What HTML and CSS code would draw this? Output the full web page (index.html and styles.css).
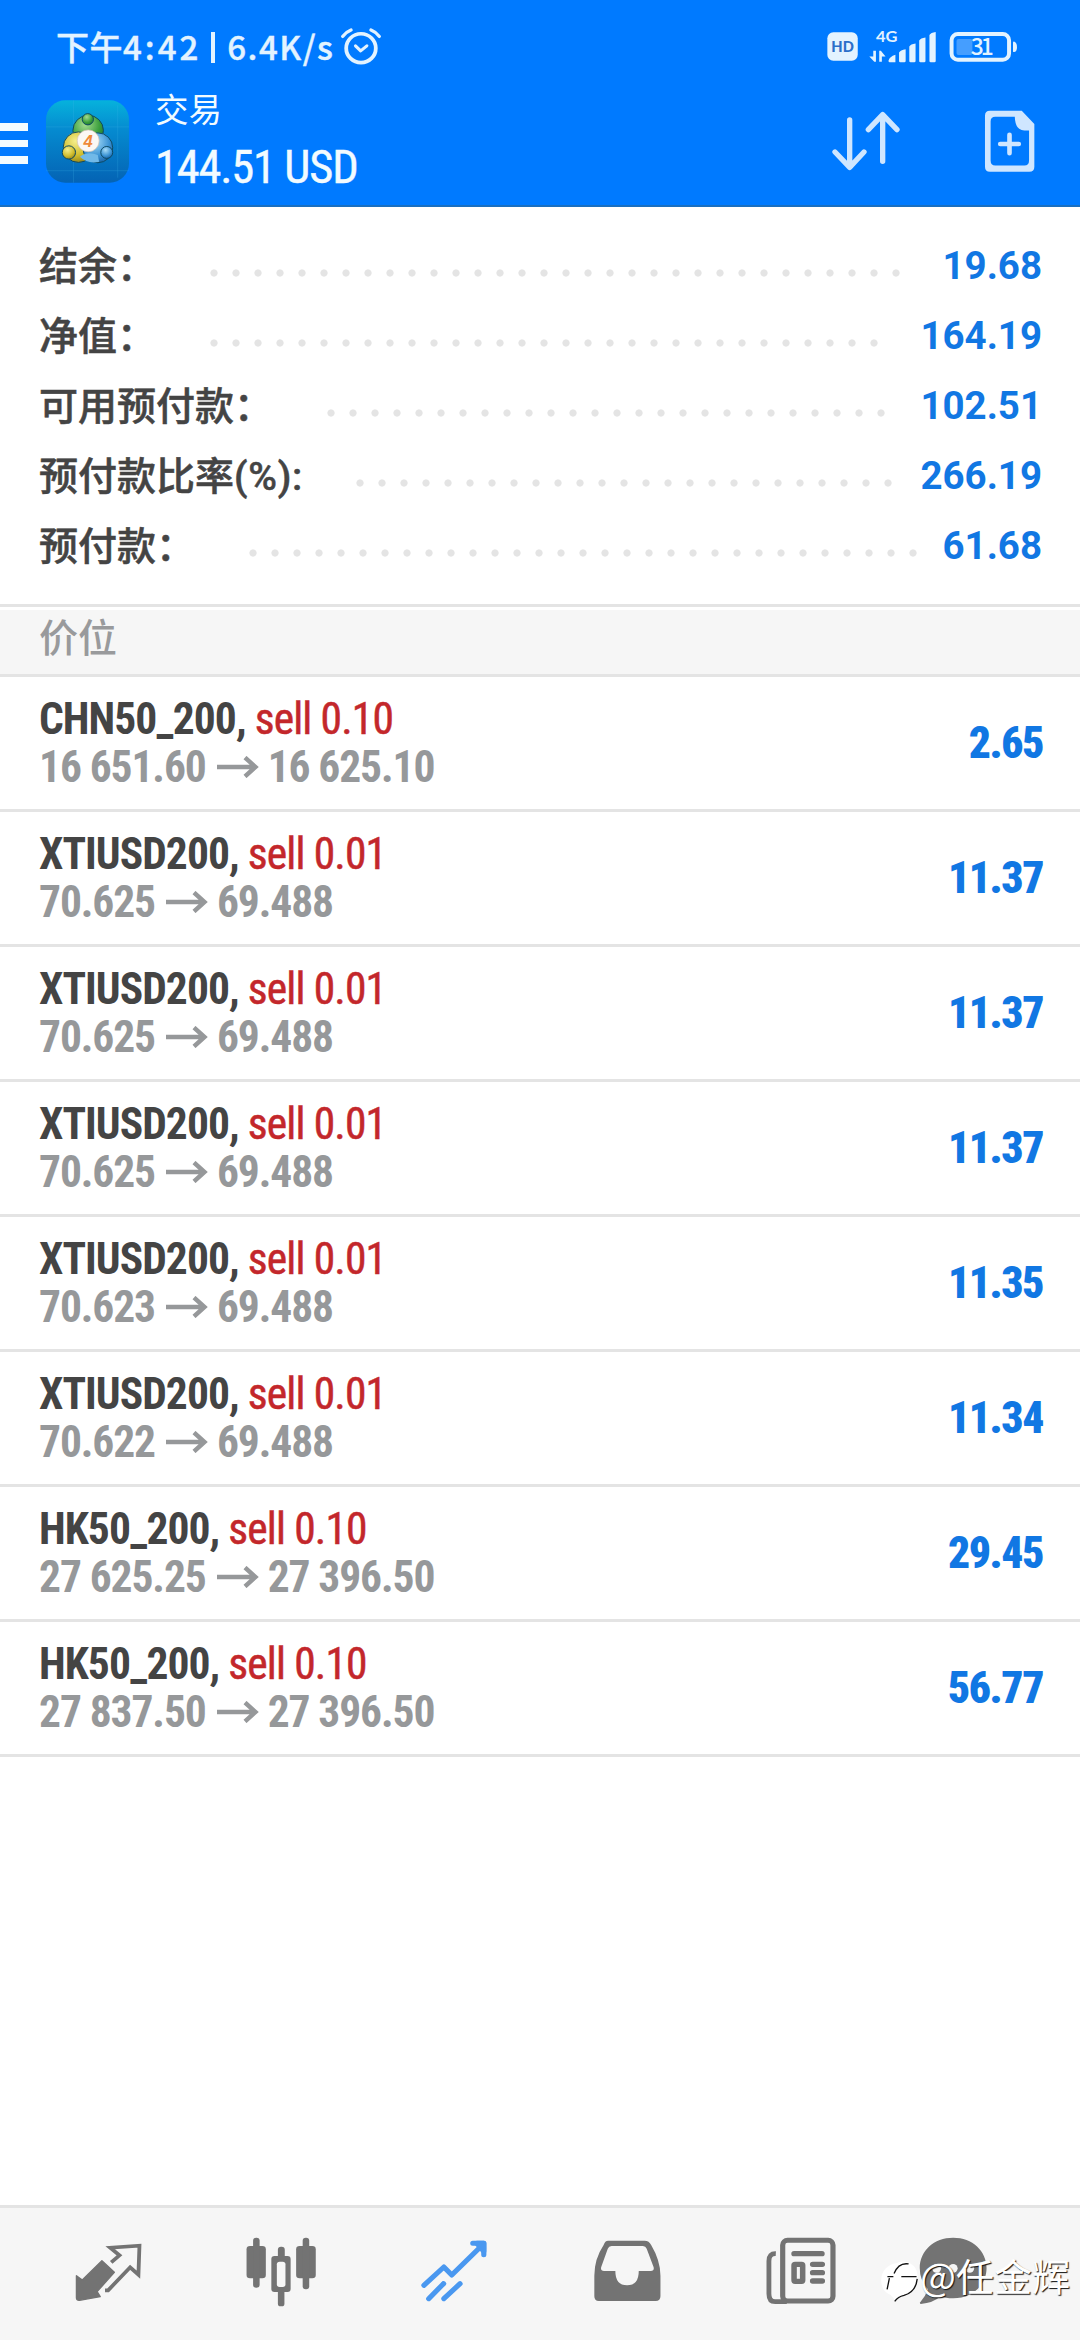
FILE: index.html
```html
<!DOCTYPE html>
<html lang="zh-CN">
<head>
<meta charset="utf-8">
<title>交易</title>
<link rel="stylesheet" href="styles.css">
</head>
<body>
<div class="screen">
  <header class="top">
    <div class="status">
      <div class="status-left">
        <span class="time"><span class="ampm">下午</span>4:42</span><span class="divider"></span><span class="speed">6.4K/s</span>
        <svg class="alarm" viewBox="986 82 122 116" preserveAspectRatio="none" fill="none" stroke="#e3f3ff" stroke-linecap="round" stroke-linejoin="round">
          <circle cx="1047" cy="145" r="43" stroke-width="11"/>
          <path d="M1031 138l15 15 18-15" stroke-width="9"/>
          <path d="M994 110q9-13 24-19M1100 110q-9-13-24-19" stroke-width="10"/>
        </svg>
      </div>
      <svg class="status-right" viewBox="130 84 590 112">
        <rect x="137" y="97" width="92" height="86" rx="18" fill="#e3f3ff"/>
        <text class="hd" x="183" y="158" text-anchor="middle" textLength="68" lengthAdjust="spacingAndGlyphs">HD</text>
        <text class="net" x="284" y="125" textLength="65" lengthAdjust="spacingAndGlyphs">4G</text>
        <g fill="#e3f3ff">
          <path d="M276 153h8v33h-5l-15-16h12zM294 186v-33h5l14 17h-11v16z"/>
          <path d="M322 183q3-12 21-18v23h-17q-4 0-4-5zM354 158q4-7 20-10v36q0 4-4 4h-12q-4 0-4-4zM385 140q4-7 19-9v53q0 4-4 4h-11q-4 0-4-4zM415 122q4-7 19-9v71q0 4-4 4h-11q-4 0-4-4zM446 105q4-7 19-9v88q0 4-4 4h-11q-4 0-4-4z"/>
          <path d="M699 128q0-3 3-3 9 3 9 17t-9 15q-3 0-3-3z"/>
          <rect x="528" y="117" width="48" height="49" rx="6" fill-opacity=".3"/>
        </g>
        <rect x="513" y="102" width="174" height="78" rx="19" fill="none" stroke="#e3f3ff" stroke-width="12"/>
        <text class="level" x="571" y="167" textLength="70">31</text>
      </svg>
    </div>
    <div class="bar">
      <div class="menu"><i></i><i></i><i></i></div>
      <svg class="logo" viewBox="48 45 250 248">
        <defs>
          <linearGradient id="bg" x1="0" y1="0" x2="0" y2="1"><stop offset="0" stop-color="#06b2dc"/><stop offset=".35" stop-color="#058bd0"/><stop offset="1" stop-color="#0463b4"/></linearGradient>
          <radialGradient id="green" cx=".4" cy=".3" r=".8"><stop offset="0" stop-color="#a5dc90"/><stop offset=".6" stop-color="#3a9e3c"/><stop offset="1" stop-color="#176a2a"/></radialGradient>
          <radialGradient id="gold" cx=".4" cy=".3" r=".8"><stop offset="0" stop-color="#f5ee8c"/><stop offset=".6" stop-color="#cfbc2c"/><stop offset="1" stop-color="#857415"/></radialGradient>
          <radialGradient id="blue" cx=".4" cy=".3" r=".8"><stop offset="0" stop-color="#a7dcf8"/><stop offset=".6" stop-color="#3b93d4"/><stop offset="1" stop-color="#13569a"/></radialGradient>
        </defs>
        <rect x="48" y="45" width="250" height="248" rx="58" fill="url(#bg)"/>
        <path d="M131 45v248M264 60v218M48 125h250M48 257h250" stroke="#43b9ea" stroke-width="1.5" opacity=".45"/>
        <g stroke="#0d4a63" stroke-width="3">
          <circle cx="175" cy="136" r="46" fill="url(#green)"/>
          <circle cx="146" cy="186" r="46" fill="url(#gold)"/>
          <circle cx="204" cy="188" r="45" fill="url(#blue)"/>
          <path d="M150 215q24-18 54-5l4 20q-34 8-58-15z" fill="#71b9e8" stroke="none"/>
          <circle cx="174" cy="102" r="17" fill="url(#green)"/>
          <circle cx="117" cy="202" r="20" fill="url(#gold)"/>
          <circle cx="231" cy="202" r="18" fill="url(#blue)"/>
        </g>
        <circle cx="175" cy="167" r="33" fill="#fbf8f5" stroke="#d3bfb2" stroke-width="2"/>
        <text class="four" x="175" y="185" text-anchor="middle">4</text>
      </svg>
      <div class="titles">
        <div class="title">交易</div>
        <div class="balance">144.51 USD</div>
      </div>
      <svg class="act sort" viewBox="150 326 210 192" fill="none" stroke="#cfe6ff" stroke-width="16" stroke-linecap="round" stroke-linejoin="round">
        <path d="M206 359v141M162 455l44 46 43-46M305 483V343M262 388l43-45 43 45"/>
      </svg>
      <svg class="act doc" viewBox="604 326 160 192">
        <path fill="#cfe6ff" fill-rule="evenodd" d="M625 331h96l38 40v129q0 15-15 15H625q-15 0-15-15V346q0-15 15-15zM641 349q-14 0-14 14v118q0 15 14 15h88q14 0 14-15v-91h-14q-28 0-29-41z"/>
        <path d="M684 403v56M656 431h56" stroke="#cfe6ff" stroke-width="14" stroke-linecap="round"/>
      </svg>
    </div>
  </header>

  <section class="summary">
    <div class="sum"><span class="label">结余：</span><i class="dots" style="--n:32"></i><b>19.68</b></div>
    <div class="sum"><span class="label">净值：</span><i class="dots" style="--n:31"></i><b>164.19</b></div>
    <div class="sum"><span class="label">可用预付款：</span><i class="dots" style="--n:26"></i><b>102.51</b></div>
    <div class="sum"><span class="label">预付款比率<span class="latin">(%):</span></span><i class="dots" style="--n:25"></i><b>266.19</b></div>
    <div class="sum"><span class="label">预付款：</span><i class="dots" style="--n:31"></i><b>61.68</b></div>
  </section>

  <h2 class="section">价位</h2>

  <main class="list">
    <div class="row"><div><div class="name">CHN50_200, <span>sell 0.10</span></div><div class="price">16 651.60<svg class="arrow" viewBox="0 0 42 22"><path id="arrow" d="M0 11h39M28 1.500l10.500 9.500-10.500 9.500"/></svg>16 625.10</div></div><b>2.65</b></div>
    <div class="row"><div><div class="name">XTIUSD200, <span>sell 0.01</span></div><div class="price">70.625<svg class="arrow" viewBox="0 0 42 22"><use href="#arrow"/></svg>69.488</div></div><b>11.37</b></div>
    <div class="row"><div><div class="name">XTIUSD200, <span>sell 0.01</span></div><div class="price">70.625<svg class="arrow" viewBox="0 0 42 22"><use href="#arrow"/></svg>69.488</div></div><b>11.37</b></div>
    <div class="row"><div><div class="name">XTIUSD200, <span>sell 0.01</span></div><div class="price">70.625<svg class="arrow" viewBox="0 0 42 22"><use href="#arrow"/></svg>69.488</div></div><b>11.37</b></div>
    <div class="row"><div><div class="name">XTIUSD200, <span>sell 0.01</span></div><div class="price">70.623<svg class="arrow" viewBox="0 0 42 22"><use href="#arrow"/></svg>69.488</div></div><b>11.35</b></div>
    <div class="row"><div><div class="name">XTIUSD200, <span>sell 0.01</span></div><div class="price">70.622<svg class="arrow" viewBox="0 0 42 22"><use href="#arrow"/></svg>69.488</div></div><b>11.34</b></div>
    <div class="row"><div><div class="name">HK50_200, <span>sell 0.10</span></div><div class="price">27 625.25<svg class="arrow" viewBox="0 0 42 22"><use href="#arrow"/></svg>27 396.50</div></div><b>29.45</b></div>
    <div class="row"><div><div class="name">HK50_200, <span>sell 0.10</span></div><div class="price">27 837.50<svg class="arrow" viewBox="0 0 42 22"><use href="#arrow"/></svg>27 396.50</div></div><b>56.77</b></div>
  </main>

  <nav class="nav">
    <svg viewBox="63.900 54 502.400 396" preserveAspectRatio="none">
      <path fill="#737373" stroke="#737373" stroke-width="4" stroke-linejoin="round" d="M296 212l36 35-50 58 9 15-60 11q-9 1-9-8v-66l17 13z"/>
      <path fill="none" stroke="#737373" stroke-width="11" d="M323 217l24-21-27-23 85-6-3 87-24-22-64 69h-9"/>
    </svg>
    <svg viewBox="566.300 54 502.400 396" preserveAspectRatio="none" fill="#737373">
      <rect x="716" y="168" width="56" height="97" rx="10"/><rect x="735" y="143" width="19" height="150" rx="9"/>
      <rect x="860" y="168" width="57" height="97" rx="10"/><rect x="879" y="143" width="19" height="155" rx="9"/>
      <rect x="807" y="170" width="20" height="40" rx="9"/><rect x="807" y="290" width="19" height="59" rx="8"/>
      <rect x="788" y="198" width="56" height="108" rx="9"/><rect x="804" y="215" width="25" height="76" rx="8" fill="#f6f6f6"/>
    </svg>
    <svg viewBox="1068.700 54 502.400 396" preserveAspectRatio="none" fill="none" stroke="#4a98f0" stroke-width="15" stroke-linecap="round" stroke-linejoin="round">
      <path d="M1231 286l58-55 23 24 89-90M1373 160h32v34"/>
      <path d="M1245 326l43-45M1289 326l47-45"/>
      <path d="M1385 160h20v24z" fill="#4a98f0"/>
      <path d="M1284 276l10 8" stroke-width="8" stroke-linecap="butt"/>
    </svg>
    <svg viewBox="3.100 54 502.400 396" preserveAspectRatio="none">
      <path fill="#737373" fill-rule="evenodd" d="M198 152h106q13 0 19 13 27 47 27 92v62q0 14-14 14H171q-13 0-13-14v-62q0-50 27-92 4-13 13-13zM208 168q-8 0-11 8l-19 55q-3 12 8 12h33q0 43 34 43t34-43h35q11 0 8-12l-20-55q-3-8-11-8z"/>
    </svg>
    <svg viewBox="505.500 54 502.400 396" preserveAspectRatio="none" fill="none" stroke="#737373">
      <rect x="705" y="151" width="146" height="182" rx="14" stroke-width="15"/>
      <path d="M685 191q-20-1-20 22v98q0 24 18 24h34" stroke-width="14"/>
      <path d="M738 191h81M792 223h28M792 248h28M792 273h28" stroke-width="16" stroke-linecap="round"/>
      <rect x="738" y="223" width="25" height="51" rx="3" stroke-width="16"/>
    </svg>
    <svg viewBox="1007.900 54 502.400 396" preserveAspectRatio="none">
      <path fill="#737373" d="M1200 143c56 0 97 40 97 91s-41 91-97 91q-22 0-36-6-22 20-58 23-5-2-1-6 15-18 22-38-24-27-24-64c0-51 41-91 97-91z"/>
      <circle cx="1152" cy="235" r="13" fill="#f6f6f6"/><circle cx="1200" cy="235" r="13" fill="#f6f6f6"/><circle cx="1248" cy="235" r="13" fill="#f6f6f6"/>
    </svg>
  </nav>

  <div class="mark">
    <svg viewBox="24 90 120 136">
      <path fill="#fff" d="M100 98q38 8 37 48-2 34-34 50-22 6-34 24-4-14-14-22-28-10-28-44 2-44 48-52 12-6 25-4z"/>
      <path fill="none" stroke="#111" stroke-width="4" d="M66 134q14-34 44-29M46 143h18M52 148l-7 34M88 143h46M136 150q-4 40-40 50-18 4-28 18"/>
    </svg>
    <span>@任金辉</span>
  </div>
</div>
</body>
</html>
```
FILE: styles.css
```css
* { box-sizing: border-box; }
body { margin: 0; background: #fff; }
svg { display: block; flex: none; }

.screen {
  position: relative;
  display: flex;
  flex-direction: column;
  width: 1080px;
  height: 2340px;
  overflow: hidden;
  background: #fff;
  font-family: Roboto, "Noto Sans CJK SC", sans-serif;
  color: #444;
}

.top {
  height: 207px;
  background: #007aff;
  border-bottom: 2px solid #1a6fc0;
}
.status {
  display: flex;
  justify-content: space-between;
  height: 94px;
  padding: 25px 59px 0 56px;
  color: #e3f3ff;
}
.status-left {
  display: flex;
  align-items: center;
  height: 42px;
  font: 500 33px/42px "Noto Sans CJK SC", sans-serif;
  letter-spacing: 1.5px;
  -webkit-text-stroke: 0.400px;
}
.time { letter-spacing: 3px; }
.ampm { letter-spacing: 0.500px; }
.divider { width: 4px; height: 31px; margin: 3px 12px 0 10px; background: #e3f3ff; }
.alarm { width: 42px; height: 39px; margin: 0 0 0 6px; }
.status-right { width: 197px; height: 37px; margin-top: 3px; }
.hd { font: 900 48px Lato, sans-serif; fill: #2b6fc9; }
.net { font: 700 46px Lato, sans-serif; fill: #e3f3ff; }
.level { font: 500 69px "Noto Sans CJK SC", sans-serif; fill: #e3f3ff; }

.bar { display: flex; align-items: flex-start; height: 111px; }
.menu { display: flex; flex-direction: column; gap: 9px; width: 28px; margin: 29px 18px 0 0; }
.menu i { height: 7.5px; background: #f2fbff; }
.logo { width: 83px; height: 83px; margin-top: 6px; }
.four { font: italic 700 50px "Liberation Sans", sans-serif; fill: #ef8a3a; }
.titles { width: 300px; margin: -6px 0 0 26px; color: #f2fbff; }
.title { font: 400 33.500px/40px "Noto Sans CJK SC", sans-serif; }
.balance { margin-top: 10.500px; font: 400 46.500px/56px "Roboto Condensed", Roboto, sans-serif; letter-spacing: -1.200px; -webkit-text-stroke: 0.400px; }
.act { height: 64px; margin-top: 14px; }
.sort { width: 70px; margin: 15px 0 0 auto; }
.doc { width: 53px; margin: 15px 44px 0 82px; }

.summary { height: 397px; padding: 23px 38px 0 39px; }
.sum { display: flex; align-items: center; height: 70px; }
.label {
  height: 66px;
  margin-top: -4px;
  font: 500 39px/66px "Noto Sans CJK SC", sans-serif;
  white-space: nowrap;
  -webkit-text-stroke: 0.500px;
}
.latin { font-family: Roboto, sans-serif; line-height: 1; letter-spacing: 0.700px; }
.dots {
  width: calc(var(--n) * 22px);
  height: 8px;
  margin: 16px 0 0 46.500px;
  background: radial-gradient(circle at 11px 4px, #e4e4e4 3.200px, transparent 4px) 0 0 / 22px 8px;
}
.sum b { margin: 1px 0 0 auto; font-size: 38.500px; font-weight: 700; color: #1177e3; }

.section {
  height: 73px;
  margin: 0;
  padding-left: 39px;
  border-top: 3px solid #e4e4e4;
  border-bottom: 3px solid #e4e4e4;
  background: #f6f6f6;
  box-shadow: inset 0 3px #fff;
  font: 500 39px/56px "Noto Sans CJK SC", sans-serif;
  color: #999a9c;
}

.list { flex: 1; }
.row {
  display: flex;
  justify-content: space-between;
  height: 135px;
  padding: 19px 37px 0 39px;
  border-bottom: 3px solid #e4e4e4;
  font: 700 43.500px/48px "Roboto Condensed", Roboto, sans-serif;
  letter-spacing: -1.100px;
}
.name { letter-spacing: -0.950px; }
.name span { font-weight: 400; letter-spacing: -0.850px; color: #c3272b; -webkit-text-stroke: 0.500px; }
.price { display: flex; align-items: center; color: #96989a; }
.arrow { width: 42px; height: 22px; margin: 0 9px 2px 11px; fill: none; stroke: #96989a; stroke-width: 4.400; }
.row b { padding-top: 24px; letter-spacing: -1.400px; color: #1177e3; }

.nav { display: flex; height: 135px; padding-left: 22px; border-top: 3px solid #e4e4e4; background: #f6f6f6; }
.nav svg { width: 173px; height: 132px; }

.mark {
  position: absolute;
  left: 880px;
  top: 2254px;
  display: flex;
  color: #fff;
  font: 400 38px/42px "Noto Sans CJK SC", sans-serif;
  text-shadow: 1px 1px 1px #111;
}
.mark svg { width: 40px; height: 45px; margin: 5px 0 0; }
```
